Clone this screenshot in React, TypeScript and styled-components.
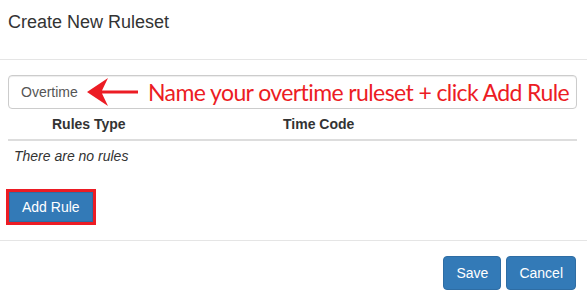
import React from "react";
import styled, { createGlobalStyle } from "styled-components";

const Global = createGlobalStyle`
  html, body { margin: 0; padding: 0; background: #fff; }
  body { font-family: "Liberation Sans", Arial, sans-serif; font-size: 14px; color: #333; }
  * { box-sizing: border-box; }
`;

const Modal = styled.div`
  width: 587px;
  height: 298px;
  background: #fff;
  overflow: hidden;
`;

const Header = styled.div`
  height: 60px;
  padding: 9px 10px 0 8px;
  border-bottom: 1px solid #e5e5e5;
`;

const Title = styled.h4`
  margin: 0;
  font-size: 18px;
  font-weight: normal;
  line-height: 26px;
  color: #333;
`;

const Body = styled.div`
  padding: 15px 10px 18px 8px;
  border-bottom: 1px solid #e5e5e5;
`;

const InputWrap = styled.div`
  position: relative;
`;

const TextInput = styled.input`
  display: block;
  width: 100%;
  height: 34px;
  padding: 6px 12px;
  font-family: "Liberation Sans", Arial, sans-serif;
  font-size: 14px;
  line-height: 20px;
  color: #555;
  border: 1px solid #ccc;
  border-radius: 4px;
  background: #fff;
  box-shadow: inset 0 1px 1px rgba(0, 0, 0, 0.075);
  outline: none;
`;

const Callout = styled.div`
  position: absolute;
  left: 79px;
  top: 0;
  height: 34px;
  display: flex;
  align-items: center;
  gap: 10px;
  pointer-events: none;
`;

const CalloutText = styled.span`
  font-family: Lato, "Open Sans", sans-serif;
  font-size: 23px;
  line-height: 30px;
  color: #ec1c24;
  white-space: nowrap;
  letter-spacing: -0.6px;
`;

const Table = styled.div`
  display: grid;
  grid-template-columns: 275px 1fr;
`;

const HeadCell = styled.div<{ $pad: number }>`
  padding: 5px 0 5px ${(p) => p.$pad}px;
  line-height: 20px;
  font-weight: bold;
  color: #333;
  border-bottom: 2px solid #ddd;
`;

const EmptyCell = styled.div`
  grid-column: 1 / -1;
  padding: 5px 6px;
  line-height: 20px;
  font-style: italic;
  color: #333;
`;

const Btn = styled.button<{ $flag?: boolean }>`
  display: inline-block;
  padding: ${(p) => (p.$flag ? "4px 12px" : "6px 12px")};
  font-family: "Liberation Sans", Arial, sans-serif;
  font-size: 14px;
  line-height: 20px;
  color: #fff;
  background: #337ab7;
  border: 1px solid #2e6da4;
  border-radius: ${(p) => (p.$flag ? "0" : "4px")};
  outline: ${(p) => (p.$flag ? "3px solid #ec1c24" : "none")};
  cursor: pointer;
`;

const AddRow = styled.div`
  margin-top: 21px;
  padding-left: 1px;
`;

const Footer = styled.div`
  display: flex;
  justify-content: flex-end;
  gap: 5px;
  padding: 15px 11px 0 8px;
`;

const Arrow = () => (
  <svg width="51" height="30" viewBox="0 0 51 30">
    <path d="M0 15 L21 1 L15 13.5 L51 13.5 L51 16.5 L15 16.5 L21 29 Z" fill="#ec1c24" />
  </svg>
);

export default function App() {
  return (
    <>
      <Global />
      <Modal>
        <Header>
          <Title>Create New Ruleset</Title>
        </Header>
        <Body>
          <InputWrap>
            <TextInput defaultValue="Overtime" />
            <Callout>
              <Arrow />
              <CalloutText>Name your overtime ruleset + click Add Rule</CalloutText>
            </Callout>
          </InputWrap>
          <Table>
            <HeadCell $pad={44}>Rules Type</HeadCell>
            <HeadCell $pad={0}>Time Code</HeadCell>
            <EmptyCell>There are no rules</EmptyCell>
          </Table>
          <AddRow>
            <Btn $flag>Add Rule</Btn>
          </AddRow>
        </Body>
        <Footer>
          <Btn>Save</Btn>
          <Btn>Cancel</Btn>
        </Footer>
      </Modal>
    </>
  );
}
